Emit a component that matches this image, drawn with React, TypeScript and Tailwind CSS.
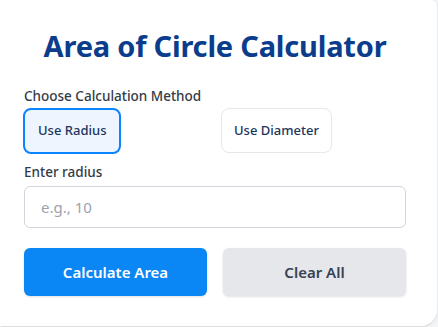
import React, { useState } from "react";

const App = () => {
  const [method, setMethod] = useState<"radius" | "diameter">("radius");
  const [value, setValue] = useState("");

  return (
    <div
      className="h-[327px] w-[438px] overflow-hidden bg-[#f3f4f6]"
      style={{ fontFamily: '"Noto Sans", "Open Sans", sans-serif' }}
    >
      <div className="h-[326px] w-[437px] rounded-tr-md rounded-br-2xl bg-white pl-6 pr-[31px] pt-[24px] shadow-sm">
        <h1 className="text-center text-[29px] font-bold tracking-[-0.2px] text-[#0b3d8c]">
          Area of Circle Calculator
        </h1>

        <p className="mt-[18px] text-[13.5px] font-medium text-[#333b48]">
          Choose Calculation Method
        </p>
        <div className="mt-[2px] grid grid-cols-2 gap-4">
          <div>
            <button
              onClick={() => setMethod("radius")}
              className={
                method === "radius"
                  ? "-ml-px h-[46px] rounded-lg border-2 border-[#0a84ff] bg-[#eef5ff] px-[13px] text-[13px] font-medium text-[#1c3560]"
                  : "-ml-px h-[46px] rounded-lg border border-gray-200 bg-white px-3 text-[13px] font-medium text-[#1c3560]"
              }
            >
              Use Radius
            </button>
          </div>
          <div>
            <button
              onClick={() => setMethod("diameter")}
              className={
                method === "diameter"
                  ? "-ml-[2px] h-[46px] rounded-lg border-2 border-[#0a84ff] bg-[#eef5ff] px-[13px] text-[13px] font-medium text-[#1c3560]"
                  : "-ml-[2px] h-[45px] rounded-lg border border-gray-200 bg-white px-3 text-[13px] font-medium text-[#1c3560]"
              }
            >
              Use Diameter
            </button>
          </div>
        </div>

        <label className="mt-[8px] block text-[13.5px] font-medium text-[#333b48]">
          {method === "radius" ? "Enter radius" : "Enter diameter"}
        </label>
        <input
          type="text"
          value={value}
          onChange={(e) => setValue(e.target.value)}
          placeholder="e.g., 10"
          className="mt-[4px] h-[42px] w-full rounded-md border border-gray-300 px-4 text-[15px] text-gray-800 outline-none placeholder:text-[#9ca3af]"
        />

        <div className="mt-5 grid grid-cols-2 gap-4">
          <button className="h-12 rounded-md bg-[#0a86f5] text-[15px] font-semibold text-white shadow-sm">
            Calculate Area
          </button>
          <button
            onClick={() => setValue("")}
            className="h-12 rounded-md bg-[#e5e7eb] text-[15px] font-semibold text-[#374151] shadow-sm"
          >
            Clear All
          </button>
        </div>
      </div>
    </div>
  );
};

export default App;
